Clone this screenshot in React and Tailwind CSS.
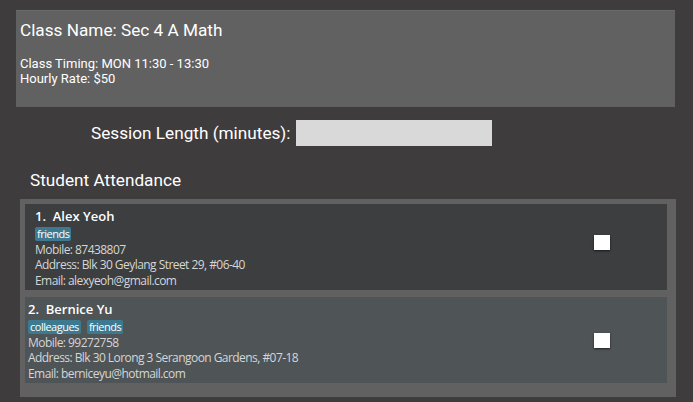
import React from "react";

const students = [
  {
    id: 1,
    name: "Alex Yeoh",
    tags: ["friends"],
    mobile: "87438807",
    address: "Blk 30 Geylang Street 29, #06-40",
    email: "alexyeoh@gmail.com",
  },
  {
    id: 2,
    name: "Bernice Yu",
    tags: ["colleagues", "friends"],
    mobile: "99272758",
    address: "Blk 30 Lorong 3 Serangoon Gardens, #07-18",
    email: "berniceyu@hotmail.com",
  },
];

const StudentCard = ({ s, index }) => {
  const first = index === 0;
  return (
    <div
      className={`flex items-center h-[86px] ${
        first ? "bg-[#3c3e3f] pl-[10px]" : "bg-[#4f5456] pl-[3px]"
      }`}
    >
      <div className="flex-1 flex flex-col font-['Open_Sans',sans-serif] pt-[2px]">
        <div className="text-[13px] font-semibold text-white leading-[17px]">
          {index + 1}.&nbsp; {s.name}
        </div>
        <div className="flex gap-[6px] mt-[2px] mb-[1px]">
          {s.tags.map((t) => (
            <span
              key={t}
              className="bg-[#3d7a8f] text-white text-[11px] tracking-[-0.5px] leading-[14px] px-[2px] rounded-[2px]"
            >
              {t}
            </span>
          ))}
        </div>
        <div className="text-[12px] tracking-[-0.55px] leading-[15.5px] text-[#d6d6d6]">
          <div>Mobile: {s.mobile}</div>
          <div>Address: {s.address}</div>
          <div>Email: {s.email}</div>
        </div>
      </div>
      <div
        className={`w-[16px] h-[15px] bg-white shadow-[0_1px_2px_rgba(0,0,0,0.6)] mr-[57px] ${
          first ? "mb-[9px]" : "mt-[1px]"
        }`}
      />
    </div>
  );
};

export default function App() {
  return (
    <div className="w-[693px] h-[402px] bg-[#3f3c3d] overflow-hidden font-['Roboto',sans-serif] text-white pt-[10px]">
      {/* Class header */}
      <div className="ml-[16px] w-[659px] h-[97px] bg-[#616161] border-t border-[#6a6a6a] px-[4px] pt-[8px]">
        <div className="text-[17.2px] leading-[22px]">Class Name: Sec 4 A Math</div>
        <div className="text-[13px] leading-[15px] mt-[15px]">
          <div>Class Timing: MON 11:30 - 13:30</div>
          <div>Hourly Rate: $50</div>
        </div>
      </div>

      {/* Session length */}
      <div className="flex items-center mt-[13px] pl-[91px]">
        <span className="text-[17.2px] leading-[26px]">Session Length (minutes):</span>
        <div className="w-[196px] h-[26px] bg-[#d9d9d9] ml-[5px]" />
      </div>

      {/* Attendance */}
      <div className="pl-[30px] mt-[24px] text-[17.2px] leading-[20px]">Student Attendance</div>
      <div className="ml-[20px] mt-[9px] w-[656px] bg-[#616161] pl-[5px] pr-[9px] pt-[5px] pb-[14px] flex flex-col gap-[7px]">
        {students.map((s, i) => (
          <StudentCard key={s.id} s={s} index={i} />
        ))}
      </div>
    </div>
  );
}
